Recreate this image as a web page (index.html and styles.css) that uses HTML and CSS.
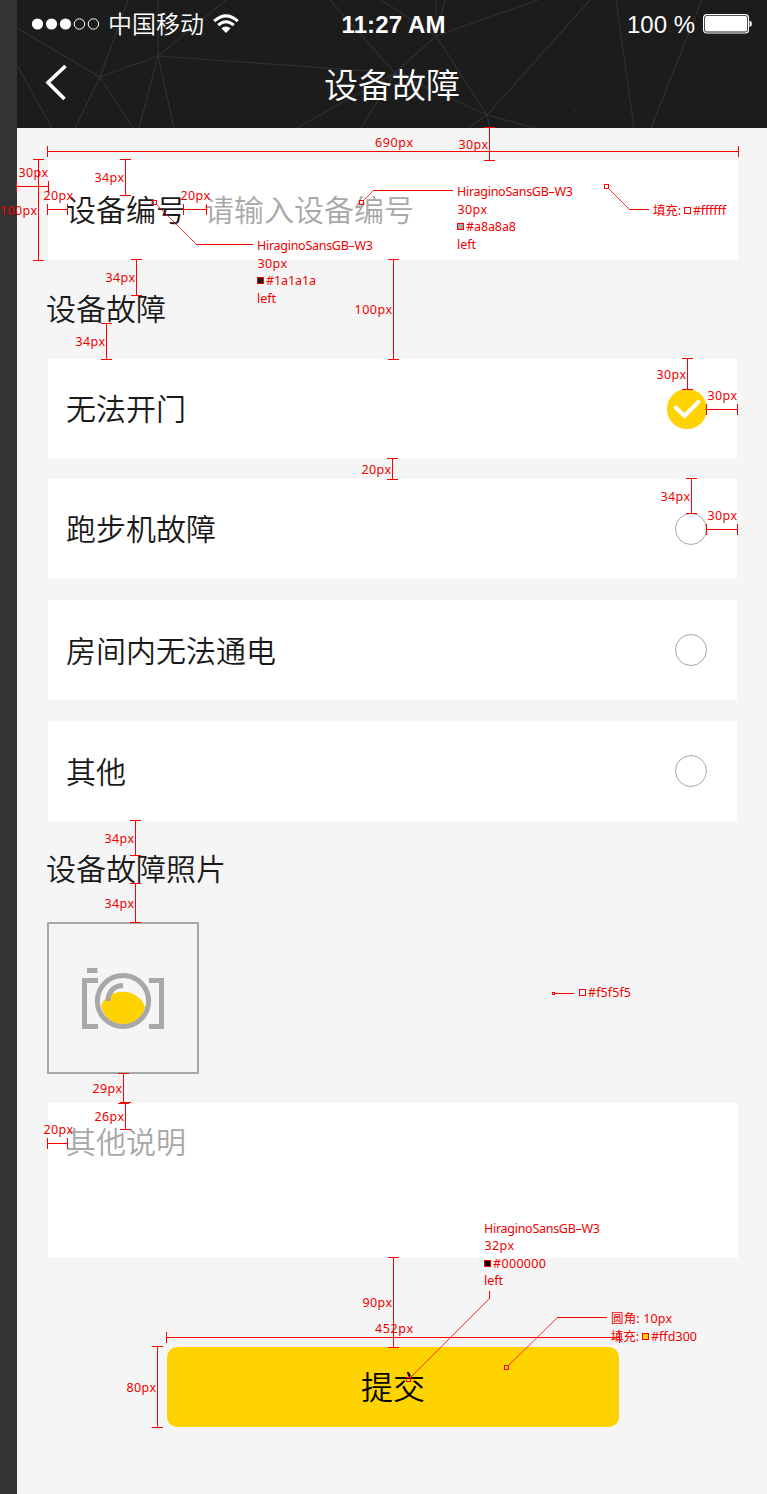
FILE: index.html
```html
<!DOCTYPE html>
<html lang="zh-CN">
<head>
<meta charset="utf-8">
<title>设备故障</title>
<link rel="stylesheet" href="styles.css">
</head>
<body>
<div class="board">
  <main class="screen">
    <header class="header">
      <svg class="mesh" width="750" height="128" viewBox="17 0 750 128" aria-hidden="true">
        <path d="M17 28L100 77L128 0M100 77L158 56L226 0M158 0V56L382 72M100 77L75 128M100 77L133 128M158 56L139 128M158 56L174 128M17 65L52 128M330 0L395 73L436 36L381 0M436 36V0M436 36L445 0M436 36L538 0M436 36L487 115L590 0M487 115L395 73L297 128M395 73L361 128M487 115L468 128M487 115L535 128M487 115L490 128M616 0L634 128M702 0L651 128"/>
        <g><circle cx="208" cy="52" r=".7"/><circle cx="131" cy="82" r=".7"/><circle cx="262" cy="74" r=".7"/><circle cx="84" cy="100" r=".7"/><circle cx="491" cy="80" r=".7"/><circle cx="575" cy="110" r=".8"/><circle cx="625" cy="104" r=".8"/><circle cx="656" cy="106" r=".7"/><circle cx="686" cy="91" r=".7"/><circle cx="543" cy="32" r=".7"/></g>
      </svg>
      <div class="status">
        <div class="carrier">
          <svg width="70" height="14" viewBox="0 0 70 14"><g fill="#fff"><circle cx="6.5" cy="7" r="5.6"/><circle cx="20.5" cy="7" r="5.6"/><circle cx="34.5" cy="7" r="5.6"/></g><g fill="none" stroke="#fff"><circle cx="48.4" cy="7" r="5.2"/><circle cx="62.4" cy="7" r="5.2"/></g></svg>
          <span class="carrier-name">中国移动</span>
          <svg width="26" height="20" viewBox="0 0 26 20"><g fill="none" stroke="#fff" stroke-width="3"><path d="M1.2 7.2Q13-3.4 24.8 7.2"/><path d="M5.2 11.2Q13 4.2 20.8 11.2"/></g><path d="M8.4 14.3Q13 10.5 17.6 14.3L13 19Z" fill="#fff"/></svg>
        </div>
        <div class="clock">11:27 AM</div>
        <div class="power"><span>100 %</span>
          <svg width="50" height="20" viewBox="0 0 50 20"><rect x=".6" y=".6" width="44.8" height="18.400" rx="3" fill="none" stroke="#fff" stroke-width="1.2"/><rect x="2" y="2" width="42" height="15.600" rx="1.500" fill="#fff"/><path d="M46.500 6.500Q49 7.300 49 9.800T46.500 13Z" fill="#fff"/></svg>
        </div>
      </div>
      <div class="navbar">
        <svg class="back" width="24" height="36" viewBox="0 0 24 36"><path d="M20.500 1L3 17.500L19.500 34" fill="none" stroke="#fff" stroke-width="3.600"/></svg>
        <h1 class="title">设备故障</h1>
      </div>
    </header>
    <form class="form">
      <div class="card field"><span>设备编号</span><span class="placeholder">请输入设备编号</span></div>
      <h2 class="heading">设备故障</h2>
      <div class="options">
        <div class="card option"><span>无法开门</span><svg class="checked" width="40" height="40" viewBox="0 0 40 40"><circle cx="20" cy="20" r="20" fill="#ffd300"/><path d="M8.600 18.500L17.500 27L31.300 13" fill="none" stroke="#fff" stroke-width="4" stroke-linecap="round"/></svg></div>
        <div class="card option"><span>跑步机故障</span><i class="radio"></i></div>
        <div class="card option spaced"><span>房间内无法通电</span><i class="radio"></i></div>
        <div class="card option spaced"><span>其他</span><i class="radio"></i></div>
      </div>
      <h2 class="heading photo-heading">设备故障照片</h2>
      <div class="photo">
        <svg width="84" height="64" viewBox="81 966 84 64"><path d="M101 1006C108 987 138 987 145 1007C142 1019 134 1024 123 1024S104 1018 101 1006Z" fill="#ffd300"/><g fill="none" stroke="#a8a8a8" stroke-width="5"><circle cx="123" cy="1001" r="25.600"/><path d="M108 1001V999Q110 986 123 985.500"/><path d="M98 980.500H84.500V1026.500H98M149 980.500H161.500V1026.500H149"/></g><path d="M87 968h10.500v5H87z" fill="#a8a8a8"/></svg>
      </div>
      <div class="note placeholder">其他说明</div>
      <button class="submit" type="button">提交</button>
    </form>
  </main>
  <svg class="specs" width="767" height="1494" viewBox="0 0 767 1494">
    <g class="lines" transform="translate(.5 .5)">
      <path d="M47 146v10M47 151H738M738 146v10"/>
      <path d="M484 127h10M489 127V160M484 160h10"/>
      <path d="M16 181v10M16 186H48M48 181v10"/>
      <path d="M33 159h10M38 159V260M33 260h10"/>
      <path d="M120 159h10M125 159V195M120 195h10"/>
      <path d="M47 204v10M47 209H67M67 204v10M183 204v10M183 209H206M206 204v10"/>
      <path d="M131 259h10M136 259V295M131 295h10M101 323h10M106 323V359M101 359h10M388 259h10M393 259V359M388 359h10"/>
      <path d="M682 358h10M687 358V389M682 389h10M706 404v10M706 409H737M737 404v10"/>
      <path d="M387 458h10M392 458V479M387 479h10M686 478h10M691 478V513M686 513h10M706 524v10M706 529H737M737 524v10"/>
      <path d="M130 820h10M135 820V855M130 855h10M130 883h10M135 883V922M130 922h10"/>
      <path d="M118 1073h10M123 1073V1103M118 1103h10M120 1102h10M125 1102V1129M120 1129h10M47 1138v10M47 1143H67M67 1138v10"/>
      <path d="M388 1257h10M393 1257V1347M388 1347h10M166 1332v10M166 1337H619M619 1332v10M152 1346h10M157 1346V1427M152 1427h10"/>
      <path d="M196 244H252M373 190H452M629 209H648M555 993H573M489 1291V1298M557 1317H606"/>
      <path d="M152 200h4v4h-4zM359 200h4v4h-4zM604 184h4v4h-4zM552 992h2v2h-2zM406 1377h4v4h-4zM504 1365h4v4h-4z"/>
    </g>
    <g class="leaders" transform="translate(.5 .5)"><path d="M156 204L196 244M363 200L373 190M608 188L629 209M410 1377L489 1298M508 1365L557 1317"/></g>
    <g class="swatches">
      <rect x="257.500" y="277.500" width="6" height="6" fill="#1a1a1a"/><rect x="457.500" y="223.500" width="6" height="6" fill="#a8a8a8"/><rect x="684.500" y="207.500" width="6" height="6" fill="#fff"/><rect x="579.500" y="989.500" width="6" height="6" fill="#f5f5f5"/><rect x="484.500" y="1260.500" width="6" height="6" fill="#000"/><rect x="642.500" y="1333.500" width="6" height="6" fill="#ffd300"/>
    </g>
    <g class="labels">
      <text x="375" y="147" textLength="38">690px</text><text x="458.500" y="149" textLength="29.500">30px</text>
      <text x="18.500" y="177" textLength="29.500">30px</text><text x="0" y="215" textLength="37">100px</text><text x="94.500" y="182" textLength="29.500">34px</text>
      <text x="43.500" y="200" textLength="29.500">20px</text><text x="180.500" y="200" textLength="29.500">20px</text><text x="105.500" y="282" textLength="29.500">34px</text><text x="75.500" y="346" textLength="29.500">34px</text><text x="354.500" y="314" textLength="37.500">100px</text>
      <text x="656.500" y="379" textLength="29.500">30px</text><text x="707.500" y="400" textLength="29.500">30px</text><text x="361.500" y="474" textLength="29.500">20px</text><text x="660.500" y="501" textLength="29.500">34px</text><text x="707.500" y="520" textLength="29.500">30px</text>
      <text x="104.500" y="843" textLength="29.500">34px</text><text x="104.500" y="908" textLength="29.500">34px</text><text x="92.500" y="1093" textLength="29.500">29px</text><text x="94.500" y="1121" textLength="29.500">26px</text><text x="43.500" y="1134" textLength="29.500">20px</text>
      <text x="362.500" y="1307" textLength="29.500">90px</text><text x="375" y="1333" textLength="38">452px</text><text x="126.500" y="1392" textLength="29.500">80px</text>
      <text x="257" y="250" textLength="116">HiraginoSansGB–W3</text><text x="257.500" y="268" textLength="29.500">30px</text><text x="266" y="285" textLength="50">#1a1a1a</text><text x="257" y="303" textLength="19">left</text>
      <text x="457" y="196" textLength="116">HiraginoSansGB–W3</text><text x="457.500" y="214" textLength="29.500">30px</text><text x="466" y="231" textLength="50">#a8a8a8</text><text x="457" y="249" textLength="19">left</text>
      <text x="653" y="215" textLength="28">填充:</text><text x="693" y="215" textLength="33">#ffffff</text><text x="588" y="997" textLength="43">#f5f5f5</text>
      <text x="484" y="1233" textLength="116">HiraginoSansGB–W3</text><text x="484.500" y="1250" textLength="29.500">32px</text><text x="493" y="1268" textLength="53">#000000</text><text x="484" y="1285" textLength="19">left</text>
      <text x="611" y="1323" textLength="61">圆角: 10px</text><text x="611" y="1341" textLength="28">填充:</text><text x="651" y="1341" textLength="46">#ffd300</text>
    </g>
  </svg>
</div>
</body>
</html>
```
FILE: styles.css
```css
* { box-sizing: border-box; }
body { margin: 0; background: #333; font-family: "Noto Sans CJK SC DemiLight", "Noto Sans CJK SC", sans-serif; font-weight: 350; color: #1a1a1a; }
.board { position: relative; width: 767px; height: 1494px; padding-left: 17px; overflow: hidden; }
.screen { width: 750px; height: 1494px; background: #f5f5f5; }
.header { position: relative; height: 128px; background: #1c1c1c; color: #fff; }
.mesh { position: absolute; inset: 0; fill: none; stroke: #303030; stroke-width: 1.2; }
.mesh g { fill: #3a3a3a; stroke: none; }
.status { position: relative; display: grid; grid-template-columns: 1fr auto 1fr; align-items: center; height: 48px; padding: 0 14px 0 14px; font-family: "Liberation Sans", sans-serif; font-weight: 400; }
.carrier { display: flex; align-items: center; }
.carrier-name { margin: -3px 9px 0 7px; font: 350 24px/36px "Noto Sans CJK SC DemiLight", "Noto Sans CJK SC", sans-serif; }
.clock { padding: 2px 0 0 3px; font-size: 24px; font-weight: 700; letter-spacing: .1px; }
.power { display: flex; justify-content: flex-end; align-items: center; gap: 8px; font-size: 24px; }
.power span { padding-top: 2px; }
.navbar { position: relative; display: grid; grid-template-columns: 80px 1fr 80px; height: 76px; align-items: center; }
.back { margin: -7px 0 0 28px; }
.title { margin: -5px 0 0; text-align: center; font-size: 34px; line-height: 50px; font-weight: 350; }
.form { display: flex; flex-direction: column; align-items: flex-start; padding: 32px 29px 0 31px; font-size: 30px; line-height: 44px; }
.card { display: flex; align-items: center; width: 689px; height: 100px; padding: 0 30px 5px 18px; background: #fff; }
.field { width: 690px; gap: 18px; }
.placeholder { color: #a8a8a8; }
.heading { display: flex; align-items: center; height: 99px; margin: 0 0 0 -2px; padding-bottom: 5px; font-size: 30px; font-weight: 350; }
.options { display: flex; flex-direction: column; gap: 20px; }
.option { justify-content: space-between; }
.spaced { margin-top: 1px; }
.option.spaced { padding-bottom: 3px; }
.checked { margin-top: 5px; }
.radio { width: 32px; height: 32px; margin-top: 5px; border: 1px solid #a8a8a8; border-radius: 50%; }
.spaced .radio { margin-top: 3px; }
.photo-heading { height: 101px; padding-bottom: 9px; }
.photo { display: grid; place-items: center; width: 152px; height: 152px; margin-left: -1px; border: 2px solid #a8a8a8; border-radius: 1px; }
.note { width: 690px; height: 155px; margin-top: 29px; padding: 15px 18px; background: #fff; }
.submit { width: 452px; height: 80px; margin: 89px 0 0 119px; padding: 0 0 4px; border: 0; border-radius: 10px; background: #ffd300; color: #000; font: inherit; font-size: 32px; }
.specs { position: absolute; inset: 0; }
.lines { fill: none; stroke: #f00; stroke-linecap: square; shape-rendering: crispEdges; }
.leaders { fill: none; stroke: #f00; stroke-width: .8; }
.swatches { stroke: #f00; }
.labels { fill: #f00000; font: 400 12.5px "Noto Sans", "Noto Sans CJK SC", sans-serif; }
```
